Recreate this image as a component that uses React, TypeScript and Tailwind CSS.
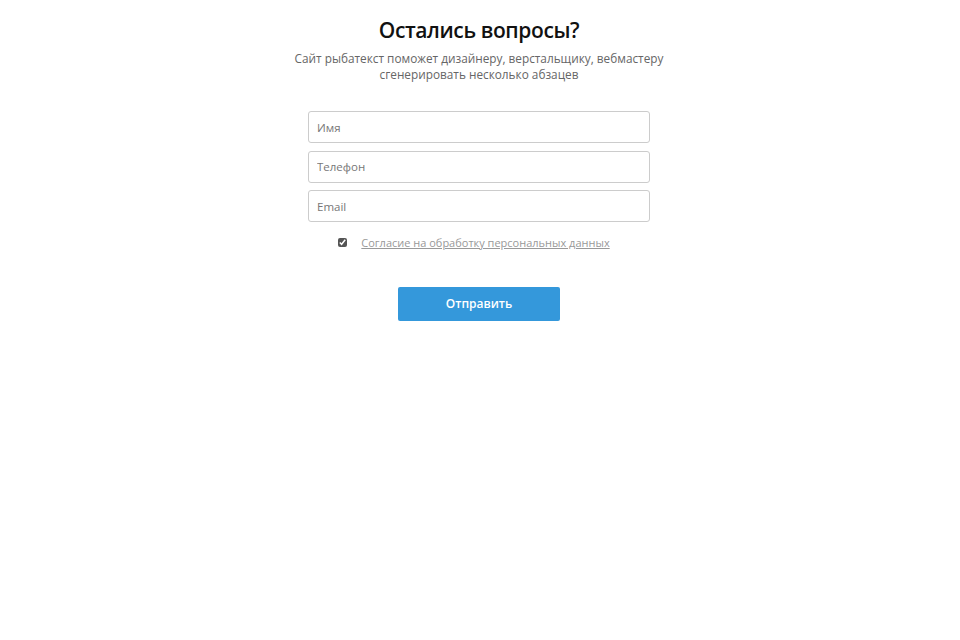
export default function App() {
  return (
    <div className="min-h-[640px] bg-white font-['Open_Sans',sans-serif]">
      <section className="flex flex-col items-center pt-[15px] pr-[2px]">
        <h2 className="text-[21px] leading-[30px] font-semibold tracking-[-0.4px] text-[#111]">Остались вопросы?</h2>
        <p className="mt-[5px] text-[11.8px] leading-[16px] text-[#666] text-center">
          Сайт рыбатекст поможет дизайнеру, верстальщику, вебмастеру
          <br />
          сгенерировать несколько абзацев
        </p>

        <form className="mt-[29px] w-[342px] flex flex-col gap-[7.5px]">
          <input
            placeholder="Имя"
            className="h-[32px] w-full rounded-[3px] border border-[#ccc] px-[8px] text-[11.5px] placeholder:text-[#777] outline-none"
          />
          <input
            placeholder="Телефон"
            className="h-[32px] w-full rounded-[3px] border border-[#ccc] px-[8px] text-[11.5px] placeholder:text-[#777] outline-none"
          />
          <input
            placeholder="Email"
            className="h-[32px] w-full rounded-[3px] border border-[#ccc] px-[8px] text-[11.5px] placeholder:text-[#777] outline-none"
          />

          <label className="mt-[5px] flex items-center justify-center gap-[14px] pr-[10px] text-[11px] leading-[16px]">
            <input type="checkbox" defaultChecked className="w-[9px] h-[9px] m-0 accent-[#555]" />
            <a href="#" className="text-[#999] underline">Согласие на обработку персональных данных</a>
          </label>

          <div className="mt-[29px] flex justify-center">
            <button
              type="button"
              className="w-[162px] h-[34px] rounded-[2px] bg-[#3498db] text-white text-[12px] font-semibold"
            >
              Отправить
            </button>
          </div>
        </form>
      </section>
    </div>
  );
}
